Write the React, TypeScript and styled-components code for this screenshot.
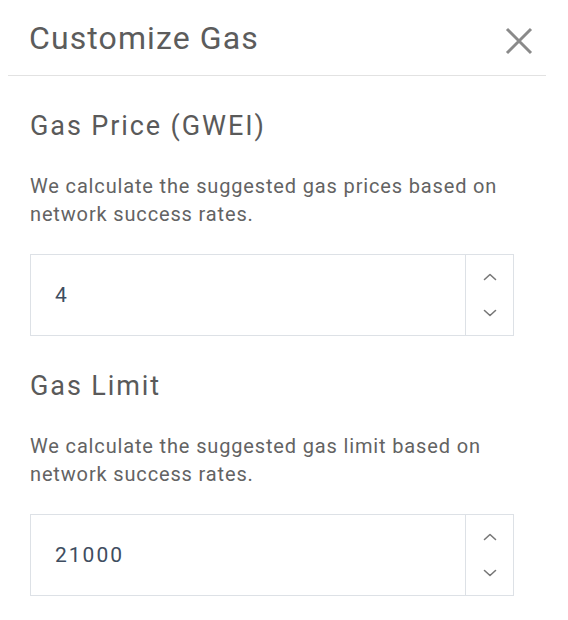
import React from "react";
import styled, { createGlobalStyle } from "styled-components";

const Global = createGlobalStyle`
  html, body { margin: 0; padding: 0; background: #ffffff; }
  body { font-family: Roboto, "Noto Sans", Arial, sans-serif; }
  * { box-sizing: border-box; }
`;

const Modal = styled.div`
  width: 568px;
  height: 620px;
  background: #ffffff;
  display: flex;
  flex-direction: column;
`;

const Header = styled.div`
  margin-left: 8px;
  width: 538px;
  height: 76px;
  border-bottom: 1px solid #e2e2e2;
  display: flex;
  align-items: center;
  justify-content: space-between;
  padding: 0 13px 0 21px;
`;

const Title = styled.h1`
  margin: 0;
  font-size: 32px;
  letter-spacing: 1.1px;
  font-weight: 400;
  color: #5c5c5c;
  line-height: 36px;
`;

const CloseButton = styled.button`
  border: none;
  background: none;
  padding: 0;
  margin-top: 6px;
  width: 28px;
  height: 28px;
  display: flex;
  align-items: center;
  justify-content: center;
  cursor: pointer;
`;

const Content = styled.div`
  padding: 34px 54px 0 30px;
  display: flex;
  flex-direction: column;
`;

const Section = styled.section<{ $gap?: number }>`
  display: flex;
  flex-direction: column;
  margin-top: ${(p) => p.$gap ?? 0}px;
`;

const SectionTitle = styled.h2`
  margin: 0;
  font-size: 27px;
  letter-spacing: 1.9px;
  font-weight: 400;
  color: #5a5a5a;
  line-height: 32px;
`;

const Description = styled.p`
  margin: 30px 0 0;
  font-size: 20px;
  letter-spacing: 0.85px;
  line-height: 28px;
  color: #636363;
`;

const InputBox = styled.div`
  margin-top: 26px;
  height: 82px;
  border: 1px solid #dde1e6;
  display: flex;
`;

const Value = styled.div`
  flex: 1;
  display: flex;
  align-items: center;
  padding-left: 24px;
  font-size: 21px;
  letter-spacing: 2px;
  color: #3e4d60;
`;

const Spinner = styled.div`
  width: 48px;
  border-left: 1px solid #dde1e6;
  display: flex;
  flex-direction: column;
  justify-content: space-between;
  align-items: center;
  padding: 17px 0 17px;
`;

const Chevron = ({ up }: { up?: boolean }) => (
  <svg width="14" height="10" viewBox="0 0 14 10">
    <polyline
      points={up ? "1.5,7.5 7,2.5 12.5,7.5" : "1.5,2.5 7,7.5 12.5,2.5"}
      fill="none"
      stroke="#777"
      strokeWidth="1.6"
      strokeLinecap="round"
      strokeLinejoin="round"
    />
  </svg>
);

const CloseIcon = () => (
  <svg width="28" height="28" viewBox="0 0 28 28">
    <path d="M2 2 L26 26 M26 2 L2 26" stroke="#8a8a8a" strokeWidth="3" fill="none" />
  </svg>
);

const Field = ({ title, desc, value, gap }: { title: string; desc: string; value: string; gap?: number }) => (
  <Section $gap={gap}>
    <SectionTitle>{title}</SectionTitle>
    <Description>{desc}</Description>
    <InputBox>
      <Value>{value}</Value>
      <Spinner>
        <Chevron up />
        <Chevron />
      </Spinner>
    </InputBox>
  </Section>
);

export default function App() {
  return (
    <>
      <Global />
      <Modal>
        <Header>
          <Title>Customize Gas</Title>
          <CloseButton aria-label="close">
            <CloseIcon />
          </CloseButton>
        </Header>
        <Content>
          <Field
            title="Gas Price (GWEI)"
            desc="We calculate the suggested gas prices based on network success rates."
            value="4"
          />
          <Field
            gap={34}
            title="Gas Limit"
            desc="We calculate the suggested gas limit based on network success rates."
            value="21000"
          />
        </Content>
      </Modal>
    </>
  );
}
